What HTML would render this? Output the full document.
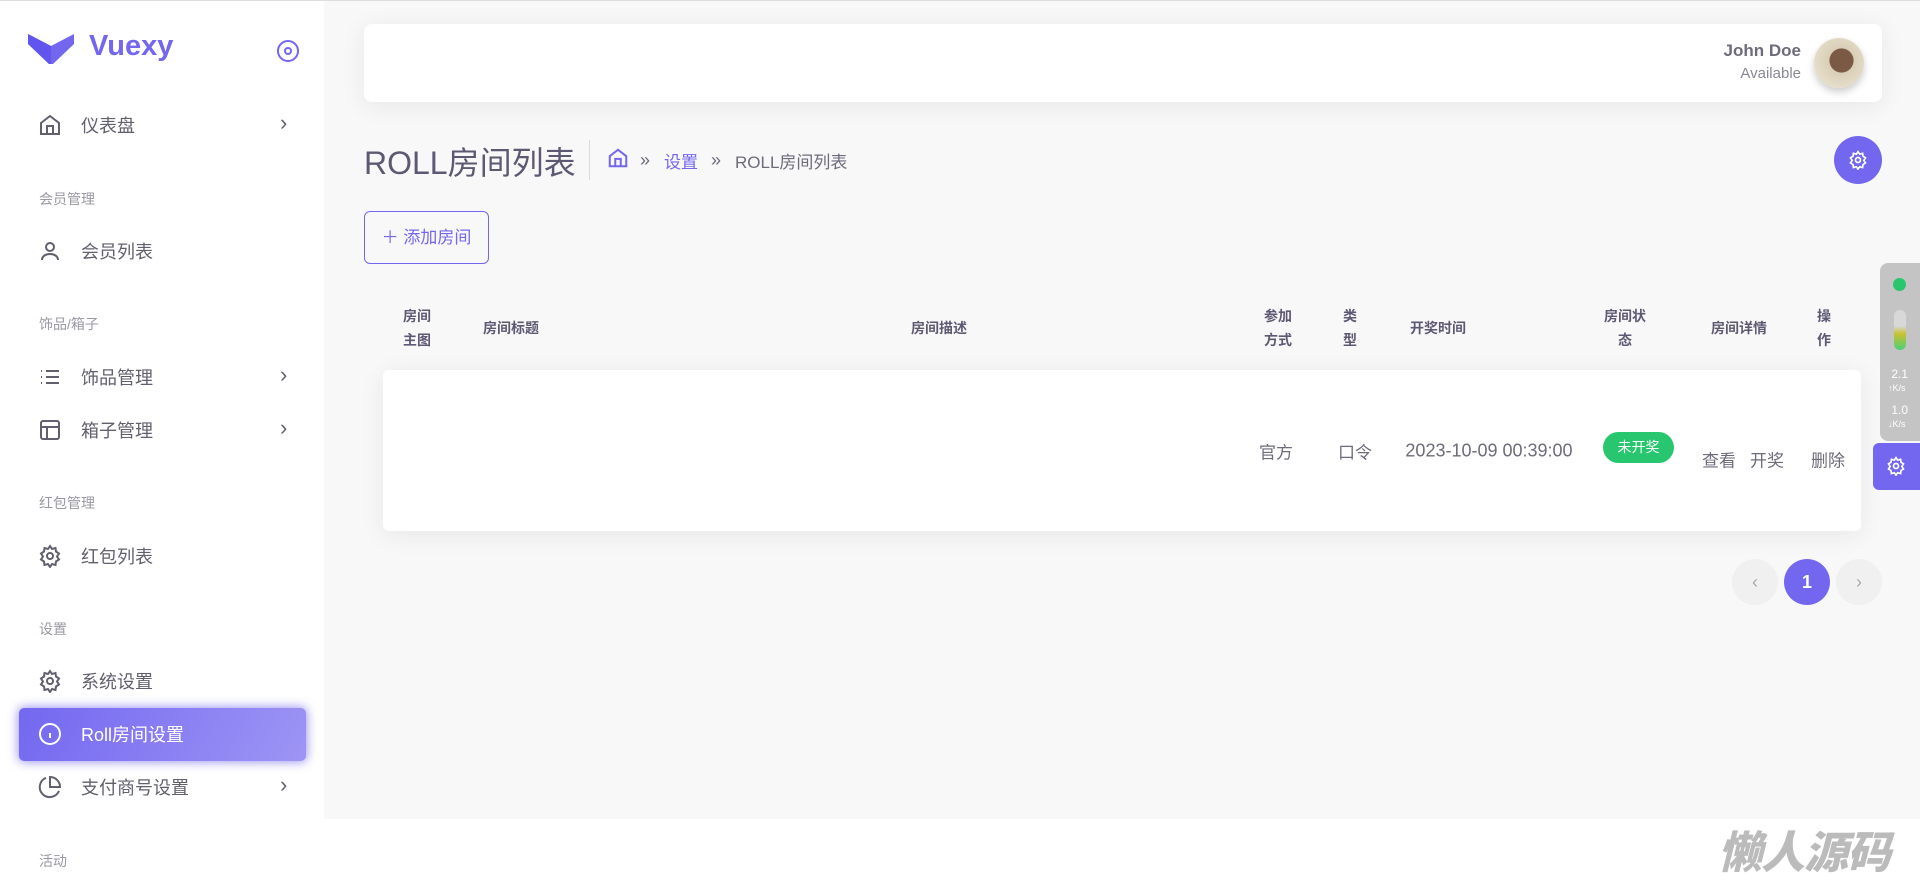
<!DOCTYPE html>
<html><head><meta charset="utf-8"><style>
*{box-sizing:border-box;margin:0;padding:0}
body{width:1920px;height:885px;overflow:hidden;background:#fff;font-family:"Liberation Sans","Noto Sans CJK SC",sans-serif;color:#6e6b7b;position:relative}
.main{position:absolute;left:324px;top:1px;width:1596px;height:818px;background:#f8f8f8}
.topline{position:absolute;left:0;top:0;width:1920px;height:1px;background:#ddd}
.side{position:absolute;left:0;top:1px;width:324px;height:884px;background:#fff}
.abs{position:absolute}
.mi{position:absolute;left:81px;font-size:18px;color:#625f6e;transform:translateY(-50%)}
.ic{position:absolute;left:38px;width:24px;height:24px;transform:translateY(-50%)}
.sh{position:absolute;left:39px;font-size:14px;color:#9a98a3;transform:translateY(-50%)}
.chev{position:absolute;left:280px;font-size:22px;color:#625f6e;transform:translateY(-50%)}
.th{position:absolute;font-size:14px;font-weight:bold;color:#5e5873;line-height:24px;text-align:center;transform:translate(-50%,-50%)}
.td{position:absolute;font-size:17px;color:#6e6b7b;transform:translate(-50%,-50%);white-space:nowrap}
</style></head><body>
<div class="main"></div>
<div class="topline"></div>
<div class="side">
 <svg class="abs" style="left:28px;top:33px" width="46" height="30" viewBox="0 0 46 30"><path d="M0 0 L23 12 L46 0 L46 10 L25 30 L21 30 L0 10Z" fill="#7367f0"/><path d="M0 0 L23 12 L23 30 L21 30 L0 10Z" fill="#5e50ee" opacity=".8"/></svg>
 <div class="abs" style="left:89px;top:29px;font-size:29px;font-weight:bold;color:#7367f0">Vuexy</div>
 <svg class="abs" style="left:276px;top:38px" width="24" height="24" viewBox="0 0 24 24" fill="none" stroke="#7367f0" stroke-width="2"><circle cx="12" cy="12" r="10"/><circle cx="12" cy="12" r="3"/></svg>

 <svg class="ic" style="top:124px" viewBox="0 0 24 24" fill="none" stroke="#625f6e" stroke-width="2"><path d="M3 10l9-7 9 7v11H3z"/><path d="M9 21v-8h6v8"/></svg>
 <div class="mi" style="top:124px">仪表盘</div><div class="chev" style="top:122px">›</div>
 <div class="sh" style="top:198px">会员管理</div>
 <svg class="ic" style="top:250px" viewBox="0 0 24 24" fill="none" stroke="#625f6e" stroke-width="2"><circle cx="12" cy="8" r="4"/><path d="M4 21c0-4 4-6 8-6s8 2 8 6"/></svg>
 <div class="mi" style="top:250px">会员列表</div>
 <div class="sh" style="top:323px">饰品/箱子</div>
 <svg class="ic" style="top:376px" viewBox="0 0 24 24" fill="none" stroke="#625f6e" stroke-width="2"><path d="M8 6h13M8 12h13M8 18h13M3 6h1M3 12h1M3 18h1"/></svg>
 <div class="mi" style="top:376px">饰品管理</div><div class="chev" style="top:374px">›</div>
 <svg class="ic" style="top:429px" viewBox="0 0 24 24" fill="none" stroke="#625f6e" stroke-width="2"><rect x="3" y="3" width="18" height="18" rx="2"/><path d="M3 9h18M9 21V9"/></svg>
 <div class="mi" style="top:429px">箱子管理</div><div class="chev" style="top:427px">›</div>
 <div class="sh" style="top:502px">红包管理</div>
 <svg class="ic" style="top:555px" viewBox="0 0 24 24" fill="none" stroke="#625f6e" stroke-width="2"><circle cx="12" cy="12" r="3"/><path d="M12 2l2 3 3.5-1 .5 3.5 3 2-2 3 2 3-3 2-.5 3.5-3.5-1-2 3-2-3-3.5 1-.5-3.5-3-2 2-3-2-3 3-2 .5-3.5 3.5 1z"/></svg>
 <div class="mi" style="top:555px">红包列表</div>
 <div class="sh" style="top:628px">设置</div>
 <svg class="ic" style="top:680px" viewBox="0 0 24 24" fill="none" stroke="#625f6e" stroke-width="2"><circle cx="12" cy="12" r="3"/><path d="M12 2l2 3 3.5-1 .5 3.5 3 2-2 3 2 3-3 2-.5 3.5-3.5-1-2 3-2-3-3.5 1-.5-3.5-3-2 2-3-2-3 3-2 .5-3.5 3.5 1z"/></svg>
 <div class="mi" style="top:680px">系统设置</div>
 <div class="abs" style="left:19px;top:707px;width:287px;height:53px;border-radius:5px;background:linear-gradient(118deg,#7367f0,#9e95f5);box-shadow:0 0 10px 1px rgba(115,103,240,.7)"></div>
 <svg class="ic" style="top:733px" viewBox="0 0 24 24" fill="none" stroke="#fff" stroke-width="2"><circle cx="12" cy="12" r="10"/><path d="M12 16v-5M12 8h.01"/></svg>
 <div class="mi" style="top:733px;color:#fff">Roll房间设置</div>
 <svg class="ic" style="top:786px" viewBox="0 0 24 24" fill="none" stroke="#625f6e" stroke-width="2"><path d="M21 15.9A10 10 0 1 1 8 2.8"/><path d="M22 12A10 10 0 0 0 12 2v10z"/></svg>
 <div class="mi" style="top:786px">支付商号设置</div><div class="chev" style="top:784px">›</div>
 <div class="sh" style="top:860px">活动</div>
</div>

<div class="abs" style="left:364px;top:24px;width:1518px;height:78px;background:#fff;border-radius:8px;box-shadow:0 4px 24px rgba(34,41,47,.08)"></div>
<div class="abs" style="right:119px;top:41px;font-size:17px;font-weight:bold;color:#6e6b7b">John Doe</div>
<div class="abs" style="right:119px;top:65px;font-size:15px;color:#8a8795">Available</div>
<div class="abs" style="left:1814px;top:38px;width:50px;height:50px;border-radius:50%;background:radial-gradient(circle at 55% 45%,#7a5a45 0 30%,#d9cfb8 32%,#efe8d8);box-shadow:0 4px 8px rgba(0,0,0,.2)"></div>

<div class="abs" style="left:364px;top:138px;font-size:32px;color:#5e5873">ROLL房间列表</div>
<div class="abs" style="left:589px;top:140px;width:1px;height:40px;background:#d6dce1"></div>
<svg class="abs" style="left:607px;top:147px" width="22" height="22" viewBox="0 0 24 24" fill="none" stroke="#7367f0" stroke-width="2.2"><path d="M3 10l9-7 9 7v11H3z"/><path d="M9 21v-8h6v8"/></svg>
<div class="abs" style="left:640px;top:150px;font-size:18px;color:#6e6b7b">»</div>
<div class="abs" style="left:664px;top:148px;font-size:17px;color:#7367f0">设置</div>
<div class="abs" style="left:711px;top:150px;font-size:18px;color:#6e6b7b">»</div>
<div class="abs" style="left:735px;top:148px;font-size:17px;color:#6e6b7b">ROLL房间列表</div>
<div class="abs" style="left:1834px;top:136px;width:48px;height:48px;border-radius:50%;background:#7367f0"></div>
<svg class="abs" style="left:1848px;top:150px" width="20" height="20" viewBox="0 0 24 24" fill="none" stroke="#fff" stroke-width="2"><circle cx="12" cy="12" r="3"/><path d="M12 2l2 3 3.5-1 .5 3.5 3 2-2 3 2 3-3 2-.5 3.5-3.5-1-2 3-2-3-3.5 1-.5-3.5-3-2 2-3-2-3 3-2 .5-3.5 3.5 1z"/></svg>

<div class="abs" style="left:364px;top:211px;width:125px;height:53px;border:1px solid #7367f0;border-radius:6px;color:#7367f0;font-size:17px;line-height:51px;text-align:center">＋ 添加房间</div>

<div class="th" style="left:417px;top:328px">房间<br>主图</div>
<div class="th" style="left:511px;top:328px">房间标题</div>
<div class="th" style="left:939px;top:328px">房间描述</div>
<div class="th" style="left:1278px;top:328px">参加<br>方式</div>
<div class="th" style="left:1350px;top:328px">类<br>型</div>
<div class="th" style="left:1438px;top:328px">开奖时间</div>
<div class="th" style="left:1625px;top:328px">房间状<br>态</div>
<div class="th" style="left:1739px;top:328px">房间详情</div>
<div class="th" style="left:1824px;top:328px">操<br>作</div>

<div class="abs" style="left:383px;top:370px;width:1478px;height:161px;background:#fff;border-radius:6px;box-shadow:0 4px 24px rgba(34,41,47,.08)"></div>
<div class="td" style="left:1276px;top:451px">官方</div>
<div class="td" style="left:1355px;top:451px">口令</div>
<div class="td" style="left:1489px;top:451px;font-size:18px">2023-10-09 00:39:00</div>
<div class="abs" style="left:1603px;top:432px;width:71px;height:31px;border-radius:16px;background:#28c76f;color:#fff;font-size:14px;line-height:31px;text-align:center">未开奖</div>
<div class="td" style="left:1719px;top:459px">查看</div>
<div class="td" style="left:1767px;top:459px">开奖</div>
<div class="td" style="left:1828px;top:459px">删除</div>

<div class="abs" style="left:1732px;top:559px;width:46px;height:46px;border-radius:50%;background:#f0f0f0;color:#aaa;text-align:center;line-height:46px;font-size:18px">‹</div>
<div class="abs" style="left:1784px;top:559px;width:46px;height:46px;border-radius:50%;background:#7367f0;color:#fff;text-align:center;line-height:46px;font-size:18px;font-weight:bold">1</div>
<div class="abs" style="left:1836px;top:559px;width:46px;height:46px;border-radius:50%;background:#f0f0f0;color:#aaa;text-align:center;line-height:46px;font-size:18px">›</div>

<div class="abs" style="left:1880px;top:263px;width:40px;height:178px;background:#c4c4c4;border-radius:8px 0 0 8px"></div>
<div class="abs" style="left:1893px;top:278px;width:13px;height:13px;border-radius:50%;background:#28c76f"></div>
<div class="abs" style="left:1894px;top:310px;width:12px;height:40px;border-radius:6px;background:linear-gradient(#d8d8d8 40%,#c8c030 60%,#48d07a)"></div>
<div class="abs" style="left:1888px;top:368px;font-size:12px;color:#fff;line-height:13px">&nbsp;2.1<br><span style="font-size:9px">↑K/s</span></div>
<div class="abs" style="left:1888px;top:404px;font-size:12px;color:#fff;line-height:13px">&nbsp;1.0<br><span style="font-size:9px">↓K/s</span></div>
<div class="abs" style="left:1873px;top:443px;width:47px;height:47px;background:#7367f0;border-radius:6px 0 0 6px"></div>
<svg class="abs" style="left:1886px;top:456px" width="20" height="20" viewBox="0 0 24 24" fill="none" stroke="#fff" stroke-width="2"><circle cx="12" cy="12" r="3"/><path d="M12 2l2 3 3.5-1 .5 3.5 3 2-2 3 2 3-3 2-.5 3.5-3.5-1-2 3-2-3-3.5 1-.5-3.5-3-2 2-3-2-3 3-2 .5-3.5 3.5 1z"/></svg>

<div class="abs" style="left:1718px;top:824px;font-size:44px;font-weight:900;font-style:italic;color:#bbb;letter-spacing:-1px;font-family:'Noto Sans CJK SC',sans-serif;line-height:50px">懒人源码</div>
</body></html>
